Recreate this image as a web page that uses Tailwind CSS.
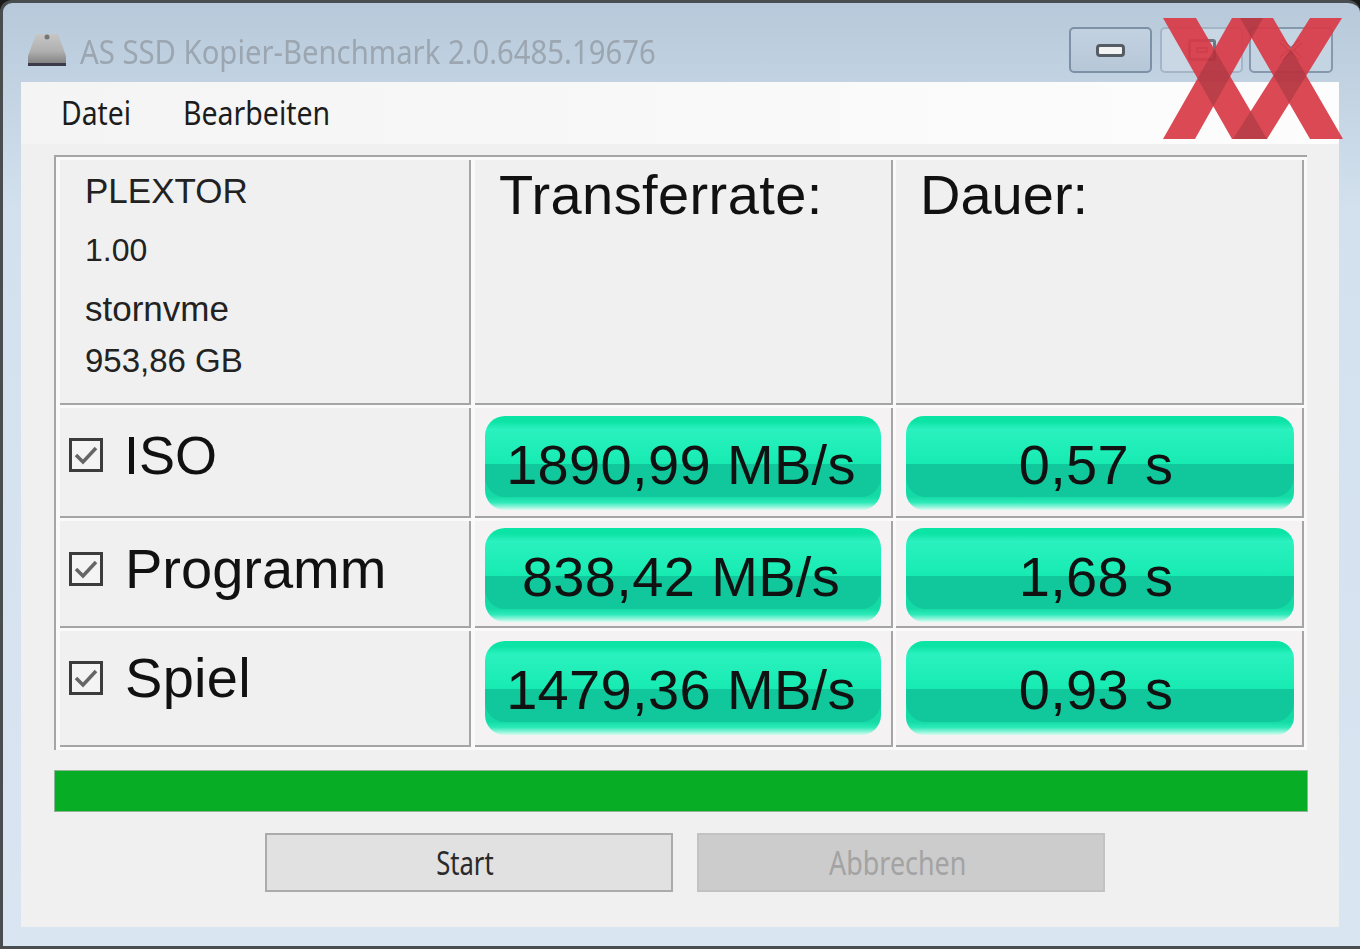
<!DOCTYPE html>
<html lang="de">
<head>
<meta charset="utf-8">
<script src="https://cdn.jsdelivr.net/npm/@tailwindcss/browser@4"></script>
<title>AS SSD Kopier-Benchmark</title>
</head>
<body class="m-0 bg-[#1a1a1a] overflow-hidden">
<div class="relative w-[1360px] h-[949px] bg-[#1a1a1a] overflow-hidden">
  <div class="w-[1360px] h-[949px] box-border border-t-[3px] border-l-[3px] border-b-[3px] border-[#4a4d50] rounded-tl-[12px] rounded-tr-[12px] bg-gradient-to-b from-[#b7c9da] via-[#d3e1ee] via-[22%] to-[#d9e5f1] flex flex-col blur-[0.6px]">
    <!-- title bar -->
    <div class="h-[79px] shrink-0 flex items-start">
      <svg class="ml-[24px] mt-[29px] shrink-0" width="40" height="35" viewBox="0 0 40 35" aria-hidden="true">
        <defs><linearGradient id="d" x1="0" y1="0" x2="0" y2="1"><stop offset="0" stop-color="#c6c6c6"/><stop offset="0.55" stop-color="#b0b0b0"/><stop offset="1" stop-color="#7c7c7c"/></linearGradient></defs>
        <path d="M9 2 H31 L39 24 V33 H1 V24 Z" fill="url(#d)"/>
        <rect x="1" y="31" width="38" height="3" fill="#3a3a48"/>
        <circle cx="20" cy="5" r="2.5" fill="#767676"/>
      </svg>
      <div class="ml-[13px] mt-[26px] w-[575px] h-[46px] leading-[46px] text-[32px] text-[#9ba6b1] whitespace-nowrap origin-left scale-x-[0.915] font-['Noto_Sans',sans-serif]">AS SSD Kopier-Benchmark 2.0.6485.19676</div>
      <div class="ml-auto mr-[27px] mt-[24px] flex">
        <div class="w-[83px] h-[46px] box-border border-2 border-[#7d91a6] rounded-[5px] bg-gradient-to-b from-[#c3d2e1] to-[#b6c7d8] flex items-center justify-center">
          <div class="w-[29px] h-[13px] box-border border-[3px] border-[#555c63] rounded-[4px] bg-[#f3f3f3]"></div>
        </div>
        <div class="ml-[8px] w-[83px] h-[46px] box-border border-2 border-[#a3b5c7] rounded-[5px] bg-[#c9d7e5] flex items-center justify-center">
          <div class="w-[28px] h-[22px] box-border border-[3px] border-[#6d7780] rounded-[3px] flex items-center justify-center"><div class="w-[12px] h-[6px] border-2 border-[#6d7780]"></div></div>
        </div>
        <div class="ml-[6px] w-[84px] h-[46px] box-border border-2 border-[#8699ac] rounded-[5px] bg-[#c5d4e3] flex items-center justify-center">
          <svg width="28" height="24" viewBox="0 0 28 24" aria-hidden="true"><path d="M4 3 L24 21 M24 3 L4 21" stroke="#6d7780" stroke-width="5"/><path d="M4 3 L24 21 M24 3 L4 21" stroke="#f3f3f3" stroke-width="2"/></svg>
        </div>
      </div>
    </div>
    <!-- client -->
    <div class="ml-[18px] w-[1318px] h-[845px] shrink-0 bg-[#f0f0f0] flex flex-col">
      <div class="h-[62px] mb-[11px] shrink-0 bg-gradient-to-r from-[#f4f4f4] to-[#fdfdfd] flex items-start pl-[40px] pt-[11px] text-[32px] leading-[40px] text-[#1c1c1c] font-['Noto_Sans',sans-serif]">
        <span class="w-[122px] whitespace-nowrap origin-left scale-x-[0.885]">Datei</span>
        <span class="whitespace-nowrap origin-left scale-x-[0.89]">Bearbeiten</span>
      </div>
      <!-- table -->
      <div class="ml-[33px] w-[1253px] h-[595px] shrink-0 box-border border-t-2 border-l-2 border-[#a5a5a5] bg-[#fafafa] pl-[4px] pt-[3px] font-['Liberation_Sans',sans-serif] text-[#111]">
        <div class="grid grid-cols-[411px_422px_411px] grid-rows-[245px_110px_107px_116px] gap-y-[3px] text-[56px]">
          <div class="box-border border-r-2 border-b-2 border-[#a5a5a5] bg-[#f0f0f0] pl-[25px] pt-[11px] leading-[40px] text-[#222]">
            <div class="h-[59px] text-[35px]">PLEXTOR</div>
            <div class="h-[59px] text-[32px]">1.00</div>
            <div class="h-[52px] text-[35px]">stornvme</div>
            <div class="h-[40px] text-[33px]">953,86 GB</div>
          </div>
          <div class="ml-[4px] box-border border-r-2 border-b-2 border-[#a5a5a5] bg-[#f0f0f0] pl-[24px] pt-[3px] leading-[64px] tracking-[0.4px]">Transferrate:</div>
          <div class="ml-[3px] box-border border-r-2 border-b-2 border-[#a5a5a5] bg-[#f0f0f0] pl-[24px] pt-[3px] leading-[64px]">Dauer:</div>

          <div class="box-border border-r-2 border-b-2 border-[#a5a5a5] bg-[#f0f0f0] pl-[9px] pt-[30px] flex items-start gap-[21px]">
            <svg width="34" height="34" viewBox="0 0 34 34" aria-hidden="true"><rect x="1.5" y="1.5" width="31" height="31" fill="#f4f4f4" stroke="#3c3c3c" stroke-width="3"/><path d="M7 17 L14 24 L27 10" fill="none" stroke="#666" stroke-width="3.5"/></svg>
            <span class="h-[34px] leading-[34px] text-[54px]">ISO</span>
          </div>
          <div class="ml-[4px] box-border border-r-2 border-b-2 border-[#a5a5a5] bg-[#f4f2f2] pl-[10px] pt-[8px]">
            <div class="relative w-[396px] h-[94px] rounded-[20px] overflow-hidden bg-[linear-gradient(to_bottom,#0ce4a6_0%,#0ce4a6_6%,#2af1bf_14%,#17ebb2_51%,#14dba6_51%,#14dba6_86%,#2eeab9_92%,#d8fbf1_100%)] flex items-center justify-center">
              <div class="absolute left-0 right-0 top-[48px] h-[33px] rounded-b-[20px] bg-[#10c89b]"></div>
              <span class="relative pt-[4px] pr-[4px] leading-[60px] tracking-[0.35px]">1890,99 MB/s</span>
            </div>
          </div>
          <div class="ml-[3px] box-border border-r-2 border-b-2 border-[#a5a5a5] bg-[#f4f2f2] pl-[10px] pt-[8px]">
            <div class="relative w-[388px] h-[94px] rounded-[18px] overflow-hidden bg-[linear-gradient(to_bottom,#0ce4a6_0%,#0ce4a6_6%,#2af1bf_14%,#17ebb2_51%,#14dba6_51%,#14dba6_86%,#2eeab9_92%,#d8fbf1_100%)] flex items-center justify-center">
              <div class="absolute left-0 right-0 top-[48px] h-[33px] rounded-b-[20px] bg-[#10c89b]"></div>
              <span class="relative pt-[4px] pr-[8px] leading-[60px] tracking-[0.35px]">0,57 s</span>
            </div>
          </div>

          <div class="box-border border-r-2 border-b-2 border-[#a5a5a5] bg-[#f0f0f0] pl-[9px] pt-[31px] flex items-start gap-[22px]">
            <svg width="34" height="34" viewBox="0 0 34 34" aria-hidden="true"><rect x="1.5" y="1.5" width="31" height="31" fill="#f4f4f4" stroke="#3c3c3c" stroke-width="3"/><path d="M7 17 L14 24 L27 10" fill="none" stroke="#666" stroke-width="3.5"/></svg>
            <span class="h-[34px] leading-[34px]">Programm</span>
          </div>
          <div class="ml-[4px] box-border border-r-2 border-b-2 border-[#a5a5a5] bg-[#f4f2f2] pl-[10px] pt-[7px]">
            <div class="relative w-[396px] h-[94px] rounded-[20px] overflow-hidden bg-[linear-gradient(to_bottom,#0ce4a6_0%,#0ce4a6_6%,#2af1bf_14%,#17ebb2_51%,#14dba6_51%,#14dba6_86%,#2eeab9_92%,#d8fbf1_100%)] flex items-center justify-center">
              <div class="absolute left-0 right-0 top-[48px] h-[33px] rounded-b-[20px] bg-[#10c89b]"></div>
              <span class="relative pt-[4px] pr-[4px] leading-[60px] tracking-[0.35px]">838,42 MB/s</span>
            </div>
          </div>
          <div class="ml-[3px] box-border border-r-2 border-b-2 border-[#a5a5a5] bg-[#f4f2f2] pl-[10px] pt-[7px]">
            <div class="relative w-[388px] h-[94px] rounded-[18px] overflow-hidden bg-[linear-gradient(to_bottom,#0ce4a6_0%,#0ce4a6_6%,#2af1bf_14%,#17ebb2_51%,#14dba6_51%,#14dba6_86%,#2eeab9_92%,#d8fbf1_100%)] flex items-center justify-center">
              <div class="absolute left-0 right-0 top-[48px] h-[33px] rounded-b-[20px] bg-[#10c89b]"></div>
              <span class="relative pt-[4px] pr-[8px] leading-[60px] tracking-[0.35px]">1,68 s</span>
            </div>
          </div>

          <div class="box-border border-r-2 border-b-2 border-[#a5a5a5] bg-[#f0f0f0] pl-[9px] pt-[30px] flex items-start gap-[22px]">
            <svg width="34" height="34" viewBox="0 0 34 34" aria-hidden="true"><rect x="1.5" y="1.5" width="31" height="31" fill="#f4f4f4" stroke="#3c3c3c" stroke-width="3"/><path d="M7 17 L14 24 L27 10" fill="none" stroke="#666" stroke-width="3.5"/></svg>
            <span class="h-[34px] leading-[34px] tracking-[0.3px]">Spiel</span>
          </div>
          <div class="ml-[4px] box-border border-r-2 border-b-2 border-[#a5a5a5] bg-[#f4f2f2] pl-[10px] pt-[10px]">
            <div class="relative w-[396px] h-[94px] rounded-[20px] overflow-hidden bg-[linear-gradient(to_bottom,#0ce4a6_0%,#0ce4a6_6%,#2af1bf_14%,#17ebb2_51%,#14dba6_51%,#14dba6_86%,#2eeab9_92%,#d8fbf1_100%)] flex items-center justify-center">
              <div class="absolute left-0 right-0 top-[48px] h-[33px] rounded-b-[20px] bg-[#10c89b]"></div>
              <span class="relative pt-[4px] pr-[4px] leading-[60px] tracking-[0.35px]">1479,36 MB/s</span>
            </div>
          </div>
          <div class="ml-[3px] box-border border-r-2 border-b-2 border-[#a5a5a5] bg-[#f4f2f2] pl-[10px] pt-[10px]">
            <div class="relative w-[388px] h-[94px] rounded-[18px] overflow-hidden bg-[linear-gradient(to_bottom,#0ce4a6_0%,#0ce4a6_6%,#2af1bf_14%,#17ebb2_51%,#14dba6_51%,#14dba6_86%,#2eeab9_92%,#d8fbf1_100%)] flex items-center justify-center">
              <div class="absolute left-0 right-0 top-[48px] h-[33px] rounded-b-[20px] bg-[#10c89b]"></div>
              <span class="relative pt-[4px] pr-[8px] leading-[60px] tracking-[0.35px]">0,93 s</span>
            </div>
          </div>
        </div>
      </div>
      <!-- progress -->
      <div class="ml-[33px] mt-[20px] w-[1254px] h-[42px] shrink-0 box-border border border-[#8fb596] bg-[#07ad24]"></div>
      <!-- buttons -->
      <div class="mt-[21px] flex font-['Noto_Sans',sans-serif] text-[32px]">
        <div class="ml-[244px] w-[408px] h-[59px] box-border border-2 border-[#ababab] bg-[#e1e1e1] flex items-center justify-center text-[#2a2a2a]"><span class="mr-[8px] scale-x-[0.8]">Start</span></div>
        <div class="ml-[24px] w-[408px] h-[59px] box-border border-2 border-[#c2c2c2] bg-[#cccccc] flex items-center justify-center text-[#a3a3a3]"><span class="mr-[6px] scale-x-[0.84]">Abbrechen</span></div>
      </div>
    </div>
  </div>
  <!-- watermark logo -->
  <svg class="absolute left-[1163px] top-[18px]" width="180" height="122" viewBox="0 0 180 122" aria-hidden="true">
    <defs>
      <clipPath id="ca"><polygon points="0,0 33,0 104,121 69,121"/></clipPath>
      <clipPath id="cc"><polygon points="77,0 110,0 180,121 147,121"/></clipPath>
    </defs>
    <path fill="#d83a45" fill-opacity="0.92" d="M0,0 L33,0 L104,121 L69,121 Z M69,0 L100,0 L32,121 L0,121 Z M77,0 L110,0 L180,121 L147,121 Z M147,0 L179,0 L104,121 L70,121 Z"/>
    <g fill="#3a1a1e" fill-opacity="0.2">
      <polygon clip-path="url(#ca)" points="69,0 100,0 32,121 0,121"/>
      <polygon clip-path="url(#ca)" points="147,0 179,0 104,121 70,121"/>
      <polygon clip-path="url(#cc)" points="69,0 100,0 32,121 0,121"/>
      <polygon clip-path="url(#cc)" points="147,0 179,0 104,121 70,121"/>
    </g>
  </svg>
</div>
</body>
</html>
